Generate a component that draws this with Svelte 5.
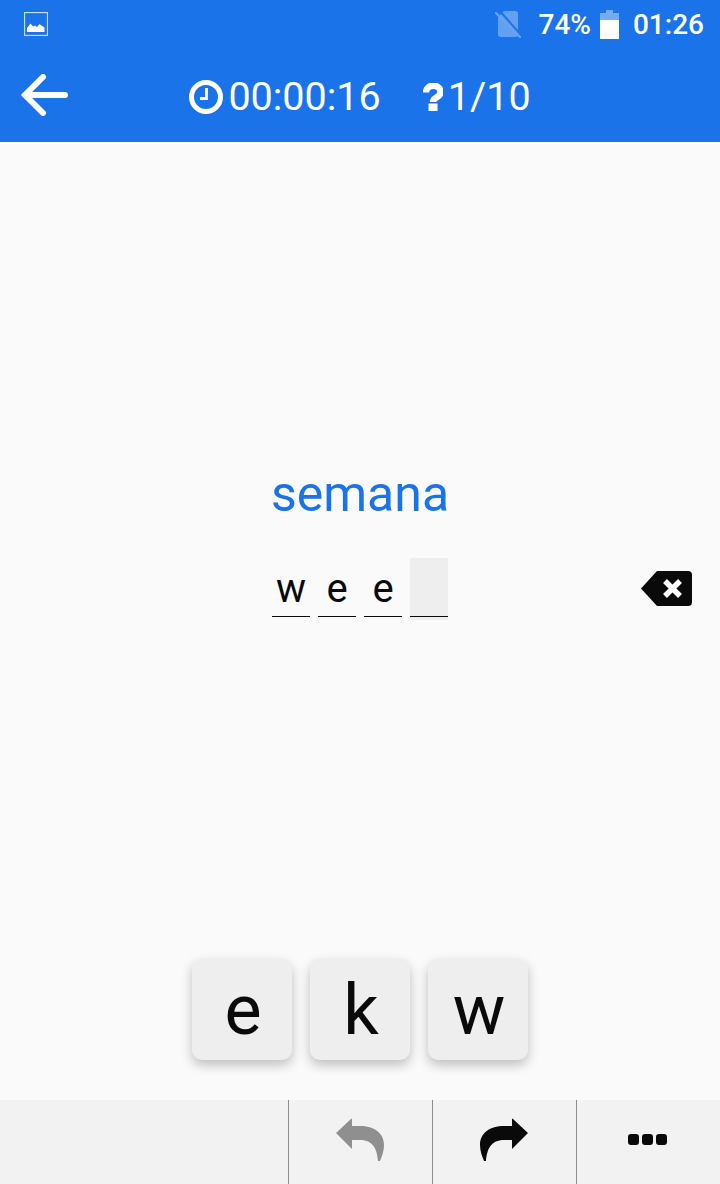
<script>
  const slots = ["w", "e", "e", ""];
  const keys = ["e", "k", "w"];
  const active = 3;
</script>

<div class="screen">
  <header class="top">
    <div class="status">
      <svg class="pic" viewBox="0 0 24 24" width="24" height="24">
        <rect x="0.5" y="0.5" width="23" height="23" fill="none" stroke="#fff" stroke-opacity="0.75" stroke-width="1.3" />
        <path d="M3 20v-4l3.500-4.500 2.500 3 2-1 2 1.500 2.500-3 2 1.500 3 2V20z" fill="#fff" />
      </svg>
      <div class="status-right">
        <svg class="nosim" viewBox="0 0 26 28" width="26" height="28">
          <path d="M9 1h11a3 3 0 0 1 3 3v20a3 3 0 0 1-3 3H6a3 3 0 0 1-3-3V7z" fill="#fff" fill-opacity="0.32" />
          <path d="M3 2l22 25" stroke="#1a73e8" stroke-width="2" transform="translate(1.500 -1.500)" />
          <path d="M1 3l24 24" stroke="#6aa3f0" stroke-width="2.200" stroke-linecap="round" />
        </svg>
        <span class="pct">74%</span>
        <svg class="batt" viewBox="0 0 19 29" width="19" height="29">
          <path d="M6 0h7v3h6v7H0V3h6z" fill="#fff" fill-opacity="0.4" />
          <rect y="10" width="19" height="19" fill="#fff" />
        </svg>
        <span class="time">01:26</span>
      </div>
    </div>
    <div class="toolbar">
      <svg class="back" viewBox="0 0 48 42" width="48" height="42">
        <path d="M44 21H4M22 3L4 21l18 18" fill="none" stroke="#fff" stroke-width="6" stroke-linecap="round" stroke-linejoin="miter" />
      </svg>
      <div class="stats">
        <svg viewBox="0 0 34 34" width="34" height="34">
          <circle cx="17" cy="17" r="14.500" fill="none" stroke="#fff" stroke-width="5" />
          <path d="M17.500 8v10.500H11" fill="none" stroke="#fff" stroke-width="2.800" />
        </svg>
        <span class="clock">00:00:16</span>
        <svg class="q" viewBox="0 0 20 28" width="20" height="28">
          <path d="M3 9.500C3 .5 17.500 .5 17.500 9c0 6-7.500 5-7.500 10" fill="none" stroke="#fff" stroke-width="6.500" />
          <rect x="5.500" y="20.500" width="9" height="7.500" fill="#fff" />
        </svg>
        <span>1/10</span>
      </div>
    </div>
  </header>

  <main class="body">
    <div class="word">semana</div>
    <div class="answer">
      <div></div>
      <div class="slots">
        {#each slots as s, i}
          <div class="slot" class:active={i === active}>{s}</div>
        {/each}
      </div>
      <div class="del">
        <svg viewBox="0 0 51 35" width="51" height="35">
          <path d="M16 0h31a4 4 0 0 1 4 4v27a4 4 0 0 1-4 4H16L0 17.500z" fill="#0a0a0a" />
          <path d="M24 10l15 15M39 10L24 25" stroke="#fff" stroke-width="5.500" />
        </svg>
      </div>
    </div>
    <div class="keys">
      {#each keys as k}
        <button class="key">{k}</button>
      {/each}
    </div>
  </main>

  <footer class="bar">
    <div class="cell wide"></div>
    <div class="cell">
      <svg viewBox="0 0 48 44" width="48" height="44">
        <path d="M0 15L15 1q1-1 1 0v7h8C38 8 48 15 48 27c0 6-2 11-4 16h-2c-1-12-5-21-18-21h-8v9z" fill="#8f8f8f" />
      </svg>
    </div>
    <div class="cell">
      <svg viewBox="0 0 48 44" width="48" height="44">
        <path d="M48 15L33 1q-1-1-1 0v7h-8C10 8 0 15 0 27c0 6 2 11 4 16h2c1-12 5-21 18-21h8v9z" fill="#0a0a0a" />
      </svg>
    </div>
    <div class="cell">
      <div class="dots"><i></i><i></i><i></i></div>
    </div>
  </footer>
</div>

<style>
  :global(body) {
    margin: 0;
  }

  .screen {
    display: flex;
    flex-direction: column;
    width: 720px;
    height: 1184px;
    background: #fafafa;
    font-family: Roboto, sans-serif;
    overflow: hidden;
  }

  .top {
    height: 142px;
    background: #1a73e8;
    color: #fff;
  }

  .status {
    display: flex;
    justify-content: space-between;
    align-items: center;
    height: 48px;
    padding: 0 16px 0 24px;
  }
  .status-right {
    display: flex;
    align-items: center;
    font-size: 28px;
    font-weight: 500;
  }
  .nosim { margin-right: 18px; }
  .pct { margin-right: 9px; }
  .batt { margin-right: 14px; }

  .toolbar {
    position: relative;
    box-sizing: border-box;
    display: flex;
    align-items: center;
    justify-content: center;
    height: 94px;
    padding-top: 3px;
    font-size: 39.5px;
  }
  .back {
    position: absolute;
    left: 21px;
    top: 26px;
  }
  .stats {
    display: flex;
    align-items: center;
  }
  .clock { margin: 0 42px 0 5px; }
  .q { margin-right: 5px; }

  .body {
    flex: 1;
    display: flex;
    flex-direction: column;
    align-items: center;
  }

  .word {
    margin-top: 322px;
    font-size: 50px;
    line-height: 60px;
    color: #1a73e8;
  }

  .answer {
    display: grid;
    grid-template-columns: 1fr auto 1fr;
    align-items: center;
    width: 100%;
    margin-top: 34px;
  }
  .slots {
    display: flex;
    gap: 8px;
  }
  .slot {
    box-sizing: border-box;
    width: 38px;
    height: 62px;
    padding-top: 8px;
    text-align: center;
    font-size: 40px;
    line-height: 46px;
    color: #0a0a0a;
    position: relative;
  }
  .slot::after {
    content: "";
    position: absolute;
    left: 0;
    right: 0;
    bottom: 3px;
    height: 1px;
    background: #0a0a0a;
  }
  .slot.active {
    background: #eeeeee;
  }
  .del {
    display: flex;
    justify-content: flex-end;
    padding: 0 28px 2px 0;
  }

  .keys {
    display: flex;
    gap: 18px;
    margin-top: 339px;
  }
  .key {
    width: 100px;
    height: 101px;
    padding: 0 0 0 2px;
    border: 0;
    border-radius: 10px;
    background: #eeeeee;
    box-shadow: 0 5px 12px rgba(0, 0, 0, 0.24);
    font-family: inherit;
    font-size: 70px;
    line-height: 1;
    color: #0a0a0a;
  }

  .bar {
    display: flex;
    height: 84px;
    background: #f2f2f2;
    margin-top: auto;
  }
  .cell {
    box-sizing: border-box;
    flex: none;
    width: 144px;
    display: flex;
    align-items: center;
    justify-content: center;
    padding: 0 2px 4px 0;
    border-right: 1px solid #8c8c8c;
  }
  .cell.wide {
    width: 289px;
  }
  .cell:last-child {
    border-right: 0;
    width: 143px;
  }
  .dots {
    display: flex;
    gap: 3px;
    margin-bottom: 2px;
  }
  .dots i {
    width: 11px;
    height: 11px;
    border-radius: 3px;
    background: #0a0a0a;
  }
</style>
